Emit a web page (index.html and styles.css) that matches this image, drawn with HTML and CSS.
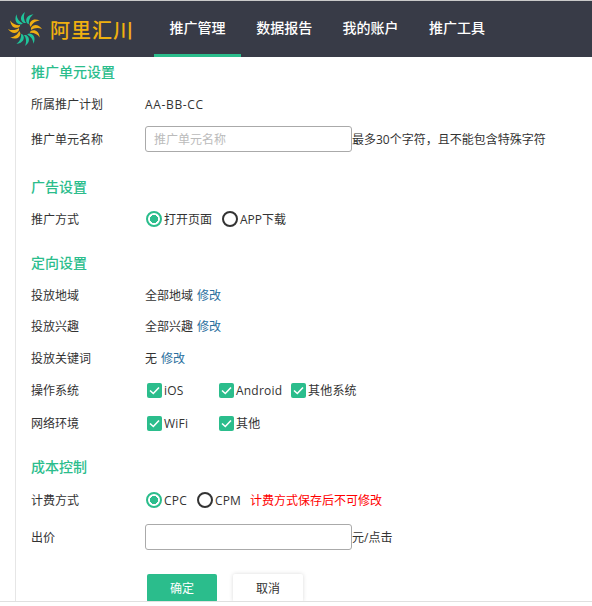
FILE: index.html
```html
<!DOCTYPE html>
<html lang="zh-CN">
<head>
  <meta charset="UTF-8" />
  <meta name="viewport" content="width=device-width, initial-scale=1.0"/>
  <title>阿里汇川</title>
  <link rel="stylesheet" href="styles.css">
</head>
<body>
  <header class="topbar">
    <div class="logo">
      <svg class="logo-mark" viewBox="-18 -18 36 36" width="36" height="36">
        <defs>
          <path id="blade" d="M0.5 -6 C -2.5 -9 -2 -14 4.5 -16.5 C 1.5 -13 1.2 -9 2.6 -5.6 Z"/>
        </defs>
        <use href="#blade" fill="#1fc49a" transform="rotate(-45)"/>
        <use href="#blade" fill="#1fc49a" transform="rotate(-15)"/>
        <use href="#blade" fill="#1fc49a" transform="rotate(15)"/>
        <use href="#blade" fill="#f0ae12" transform="rotate(45)"/>
        <use href="#blade" fill="#f0ae12" transform="rotate(75)"/>
        <use href="#blade" fill="#f0ae12" transform="rotate(105)"/>
        <use href="#blade" fill="#1fc49a" transform="rotate(135)"/>
        <use href="#blade" fill="#1fc49a" transform="rotate(165)"/>
        <use href="#blade" fill="#1fc49a" transform="rotate(195)"/>
        <use href="#blade" fill="#f0ae12" transform="rotate(225)"/>
        <use href="#blade" fill="#f0ae12" transform="rotate(255)"/>
        <use href="#blade" fill="#f0ae12" transform="rotate(285)"/>
      </svg>
      <span class="logo-text">阿里汇川</span>
    </div>
    <nav class="nav">
      <a class="nav-item active">推广管理</a>
      <a class="nav-item">数据报告</a>
      <a class="nav-item">我的账户</a>
      <a class="nav-item">推广工具</a>
    </nav>
  </header>

  <main class="content">
    <h3 class="section-title first">推广单元设置</h3>
    <div class="row"><label>所属推广计划</label><span class="plan-name">AA-BB-CC</span></div>
    <div class="row row-input"><label>推广单元名称</label><input class="field" type="text" placeholder="推广单元名称"><span>最多30个字符，且不能包含特殊字符</span></div>

    <h3 class="section-title ad-title">广告设置</h3>
    <div class="row">
      <label>推广方式</label>
      <span class="radio checked">打开页面</span>
      <span class="radio">APP下载</span>
    </div>

    <h3 class="section-title">定向设置</h3>
    <div class="row"><label>投放地域</label><span>全部地域</span><a class="link">修改</a></div>
    <div class="row row-tight"><label>投放兴趣</label><span>全部兴趣</span><a class="link">修改</a></div>
    <div class="row"><label>投放关键词</label><span>无</span><a class="link">修改</a></div>
    <div class="row">
      <label>操作系统</label>
      <span class="check"><svg class="check-box" viewBox="0 0 15 15"><rect width="15" height="15" rx="2"/><path d="M3 7.5 L6.3 10.5 L12 4.5"/></svg>iOS</span>
      <span class="check"><svg class="check-box" viewBox="0 0 15 15"><rect width="15" height="15" rx="2"/><path d="M3 7.5 L6.3 10.5 L12 4.5"/></svg>Android</span>
      <span class="check"><svg class="check-box" viewBox="0 0 15 15"><rect width="15" height="15" rx="2"/><path d="M3 7.5 L6.3 10.5 L12 4.5"/></svg>其他系统</span>
    </div>
    <div class="row row-loose">
      <label>网络环境</label>
      <span class="check"><svg class="check-box" viewBox="0 0 15 15"><rect width="15" height="15" rx="2"/><path d="M3 7.5 L6.3 10.5 L12 4.5"/></svg>WiFi</span>
      <span class="check"><svg class="check-box" viewBox="0 0 15 15"><rect width="15" height="15" rx="2"/><path d="M3 7.5 L6.3 10.5 L12 4.5"/></svg>其他</span>
    </div>

    <h3 class="section-title">成本控制</h3>
    <div class="row row-loose">
      <label>计费方式</label>
      <span class="radio checked latin">CPC</span>
      <span class="radio latin">CPM</span>
      <span class="warn">计费方式保存后不可修改</span>
    </div>
    <div class="row row-input row-price"><label>出价</label><input class="field" type="text"><span>元/点击</span></div>

    <div class="actions">
      <button class="btn btn-primary">确定</button>
      <button class="btn">取消</button>
    </div>
  </main>
  <div class="page-end"></div>
</body>
</html>
```

FILE: styles.css
```css
* {
  box-sizing: border-box;
  margin: 0;
  padding: 0;
}

body {
  background: white;
  color: #333;
  font-family: "Open Sans", "Noto Sans CJK SC", sans-serif;
  font-size: 12px;
  overflow: hidden;
}

.topbar {
  display: flex;
  height: 57px;
  background: #383b47;
  border-top: 1px solid #c9c9c9;
}

.logo {
  display: flex;
  align-items: center;
  width: 154px;
  padding-left: 7px;
}

.logo-mark {
  flex: none;
  margin-right: 7px;
}

.logo-text {
  color: #f0b00f;
  font-size: 20px;
  font-weight: 500;
  letter-spacing: 1px;
  white-space: nowrap;
}

.nav {
  display: flex;
}

.nav-item {
  width: 86.4px;
  height: 56px;
  line-height: 54px;
  text-align: center;
  color: white;
  font-size: 14px;
  font-weight: 500;
  border-bottom: 3px solid transparent;
}

.nav-item.active {
  width: 87px;
  border-bottom-color: #2bbd8c;
}

.content {
  height: 544px;
  margin-left: 15px;
  padding: 5px 0 0 15px;
  border-left: 1px solid #e6e6e6;
  overflow: hidden;
}

.page-end {
  height: 1px;
  background: #e0e0e0;
}

.section-title {
  height: 20px;
  line-height: 20px;
  margin-top: 24px;
  color: #2bbd8c;
  font-size: 14px;
  font-weight: 500;
}

.section-title.first {
  margin-top: 0;
}

.section-title.ad-title {
  margin-top: 25px;
}

.row {
  display: flex;
  align-items: center;
  height: 20px;
  margin-top: 12px;
  white-space: nowrap;
}

.row label {
  width: 114px;
  flex: none;
}

.row-tight {
  margin-top: 11px;
}

.row-loose {
  margin-top: 13px;
}

.row-input {
  height: 26px;
}

.row-price {
  margin-top: 14px;
}

.plan-name {
  letter-spacing: 0.65px;
}

.field {
  width: 207px;
  height: 26px;
  padding: 0 8px;
  border: 1px solid #aaa;
  border-radius: 3px;
  font: inherit;
  outline: none;
}

.field::placeholder {
  color: #bbb;
}

.link {
  margin-left: 4px;
  color: #2a6f9e;
}

.radio {
  display: flex;
  align-items: center;
  margin-right: 9px;
}

.radio.latin {
  letter-spacing: 0.2px;
}

.radio::before {
  content: "";
  box-sizing: border-box;
  width: 16px;
  height: 16px;
  margin: 0 2px 0 1px;
  border: 2px solid #333;
  border-radius: 50%;
}

.radio.checked::before {
  border-color: #2bbd8c;
  background: radial-gradient(circle, #2bbd8c 0 3.8px, white 4.3px);
}

.check {
  display: flex;
  align-items: center;
  width: 72px;
  letter-spacing: 0.2px;
}

.check-box {
  flex: none;
  width: 15px;
  height: 15px;
  margin: 0 2px;
}

.check-box rect {
  fill: #2bbd8c;
}

.check-box path {
  fill: none;
  stroke: white;
  stroke-width: 1.6;
}

.warn {
  color: #f00;
}

.actions {
  display: flex;
  gap: 16px;
  margin: 24px 0 0 116px;
}

.btn {
  width: 70px;
  height: 28px;
  border: 0;
  border-radius: 2px;
  background: white;
  color: #333;
  font: inherit;
  box-shadow: 0 0 4px rgba(0, 0, 0, 0.15);
}

.btn-primary {
  background: #2bbd8c;
  color: white;
  box-shadow: none;
}
```
